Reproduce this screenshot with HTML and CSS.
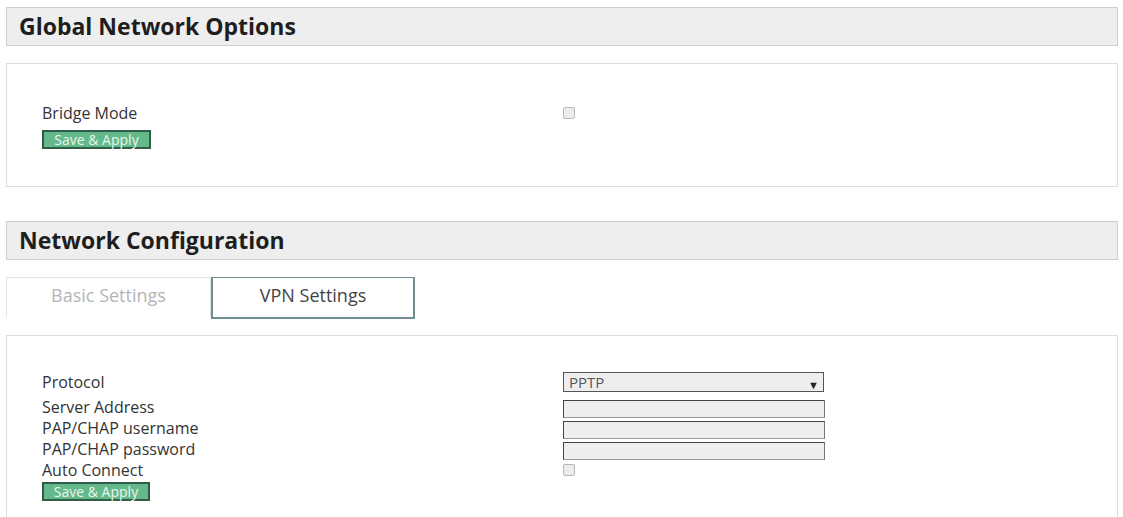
FILE: index.html
```html
<!DOCTYPE html>
<html lang="en">
<head>
    <meta charset="UTF-8">
    <title>Network</title>
    <link rel="stylesheet" href="styles.css">
</head>
<body>
    <div class="page">
        <h2 class="section-title">Global Network Options</h2>
        <div class="panel panel-global">
            <div class="form-grid">
                <label class="field-label">Bridge Mode</label>
                <div class="field"><input type="checkbox" class="check"></div>
            </div>
            <button class="save-btn">Save &amp; Apply</button>
        </div>

        <h2 class="section-title title-config">Network Configuration</h2>
        <div class="tabs">
            <div class="tab">Basic Settings</div>
            <div class="tab tab-active">VPN Settings</div>
        </div>
        <div class="panel panel-vpn">
            <div class="form-grid">
                <label class="field-label row-protocol">Protocol</label>
                <div class="field row-protocol">
                    <div class="select-wrap">
                        <select class="select">
                            <option>PPTP</option>
                            <option>L2TP</option>
                        </select>
                    </div>
                </div>
                <label class="field-label">Server Address</label>
                <div class="field"><input type="text" class="text-input"></div>
                <label class="field-label">PAP/CHAP username</label>
                <div class="field"><input type="text" class="text-input"></div>
                <label class="field-label">PAP/CHAP password</label>
                <div class="field"><input type="password" class="text-input"></div>
                <label class="field-label">Auto Connect</label>
                <div class="field field-check"><input type="checkbox" class="check"></div>
            </div>
            <button class="save-btn">Save &amp; Apply</button>
        </div>
    </div>
</body>
</html>
```
FILE: styles.css
```css
body {
    margin: 0;
    padding: 0;
    background-color: #ffffff;
    font-family: "Open Sans", "Noto Sans", sans-serif;
    color: #333;
}

.page {
    padding: 7px 5px 0 6px;
}

.section-title {
    margin: 0;
    height: 37px;
    line-height: 37px;
    padding-left: 12px;
    font-size: 23px;
    font-weight: 700;
    color: #1e1e1e;
    background-color: #eeeeee;
    border: 1px solid #cfcfcf;
}

.panel {
    border: 1px solid #dcdcdc;
    background-color: #fff;
}

.panel-global {
    margin-top: 17px;
    height: 124px;
    padding: 36px 0 0 35px;
    box-sizing: border-box;
}

.title-config {
    margin-top: 34px;
}

.tabs {
    display: flex;
    margin-top: 17px;
}

.tab {
    width: 203px;
    height: 39px;
    line-height: 34px;
    text-align: center;
    font-size: 18px;
    color: #b5b5b5;
    border: 1px solid #e2e2e2;
    border-bottom: none;
}

.tab-active {
    color: #444;
    border: 1px solid #6f8f94;
    border-width: 1px 2px 2px 2px;
    width: 200px;
}

.panel-vpn {
    margin-top: 16px;
    height: 190px;
    padding: 36px 0 0 35px;
    box-sizing: border-box;
    border-bottom: none;
}

.form-grid {
    display: grid;
    grid-template-columns: 521px 263px;
}

.field-label {
    font-size: 16px;
    line-height: 18px;
    color: #333;
}

.field {
    display: flex;
    align-items: center;
    height: 21px;
}

.field-check {
    align-items: flex-start;
    padding-top: 3px;
    box-sizing: border-box;
}

.row-protocol {
    height: 26px;
    line-height: 20px;
    align-items: flex-start;
}

.panel-global .field-label,
.panel-global .field {
    height: 26px;
    line-height: 26px;
}

.check {
    appearance: none;
    margin: 0;
    width: 12px;
    height: 12px;
    border: 1px solid #b9b9b9;
    border-radius: 2px;
    background-color: #ececec;
}

.select-wrap {
    position: relative;
    width: 261px;
}

.select-wrap::after {
    content: "\25BC";
    position: absolute;
    right: 5px;
    top: 3px;
    font-size: 11px;
    color: #222;
}

.select {
    appearance: none;
    width: 100%;
    height: 20px;
    margin: 0;
    padding: 0 5px;
    font-family: "Open Sans", sans-serif;
    font-size: 15px;
    line-height: 18px;
    color: #555;
    background-color: #eeeeee;
    border: 1px solid #555;
    border-radius: 0;
}

.text-input {
    box-sizing: border-box;
    width: 262px;
    height: 18px;
    margin: 0;
    background-color: #eeeeee;
    border: 1px solid #444;
    border-bottom-color: #999;
    border-right-color: #777;
    border-radius: 0;
}

.save-btn {
    display: block;
    margin-top: 4px;
    width: 109px;
    height: 19px;
    padding: 0;
    font-family: "Open Sans", sans-serif;
    font-size: 14px;
    line-height: 15px;
    color: #e8f6ee;
    background-color: #63b98a;
    border: 2px solid #2f5d47;
    border-radius: 0;
}

.panel-vpn .save-btn {
    margin-top: 0;
    width: 108px;
}
```
